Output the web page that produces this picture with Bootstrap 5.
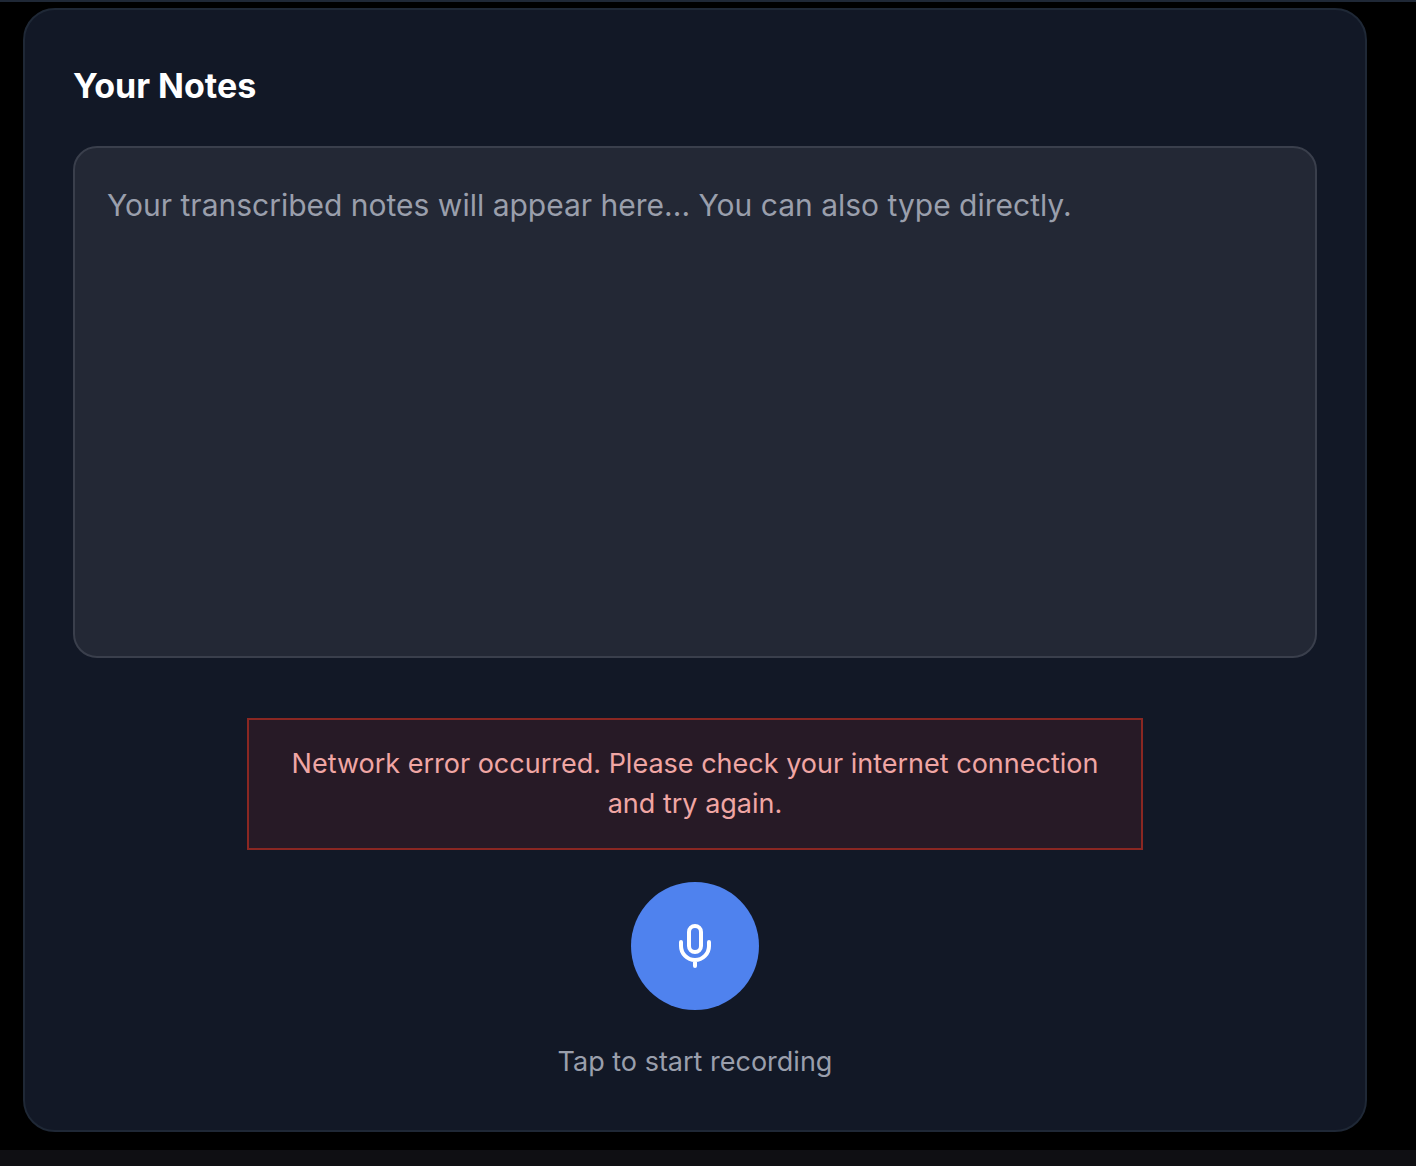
<!DOCTYPE html>
<html lang="en">
<head>
<meta charset="utf-8">
<meta name="viewport" content="width=device-width, initial-scale=1">
<title>Your Notes</title>
<link href="https://cdn.jsdelivr.net/npm/bootstrap@5.3.0/dist/css/bootstrap.min.css" rel="stylesheet">
<style>
  body {
    background: #000;
    font-family: Inter, "Liberation Sans", sans-serif;
    border-top: 2px solid #1f2836;
  }
  .notes-main { padding: 6px 49px 18px 23px; }
  .notes-card {
    background: #121826;
    border: 2px solid #1f2836;
    border-radius: 32px;
    padding: 48px;
  }
  .notes-title { font-size: 34px; line-height: 56px; font-weight: 700; margin-bottom: 32px; }
  .notes-input, .notes-input:focus {
    height: 512px;
    padding: 32px;
    resize: none;
    background: #232835;
    border: 2px solid #3a3f4c;
    border-radius: 24px;
    color: #fff;
    font-size: 30px;
    line-height: 50px;
  }
  .notes-input::placeholder { color: #9a9fac; opacity: 1; }
  .notes-error {
    max-width: 896px;
    padding: 24px 32px;
    margin: 60px 0 32px;
    background: #271a26;
    border: 2px solid #8a2722;
    border-radius: 0;
    color: #f0a6a4;
  }
  .notes-text { font-size: 27px; line-height: 40px; }
  .record-btn, .record-btn:hover {
    width: 128px;
    height: 128px;
    background: #4f82ee;
    color: #fff;
  }
  .record-hint { color: #9a9fac; margin: 32px 0 0; }
  .page-foot { background: #0f0f13; min-height: 16px; }
</style>
<script src="https://cdn.jsdelivr.net/npm/bootstrap@5.3.0/dist/js/bootstrap.bundle.min.js" defer></script>
</head>
<body class="d-flex flex-column min-vh-100">
<main class="notes-main">
  <section class="notes-card">
    <h2 class="notes-title text-white"><label for="notes">Your Notes</label></h2>
    <textarea id="notes" class="form-control notes-input" placeholder="Your transcribed notes will appear here... You can also type directly."></textarea>
    <div class="d-flex flex-column align-items-center">
      <div class="alert notes-error notes-text text-center w-100" role="alert">Network error occurred. Please check your internet connection and try again.</div>
      <button type="button" class="btn record-btn rounded-circle border-0 p-0 d-flex align-items-center justify-content-center" aria-label="Start recording">
        <svg width="48" height="48" viewBox="0 0 24 24" fill="none" stroke="currentColor" stroke-width="2" stroke-linecap="round" stroke-linejoin="round" aria-hidden="true">
          <rect x="9" y="2" width="6" height="13" rx="3"/>
          <path d="M19 10v2a7 7 0 0 1-14 0v-2M12 19v3"/>
        </svg>
      </button>
      <p class="record-hint notes-text">Tap to start recording</p>
    </div>
  </section>
</main>
<footer class="page-foot flex-grow-1"></footer>
</body>
</html>
